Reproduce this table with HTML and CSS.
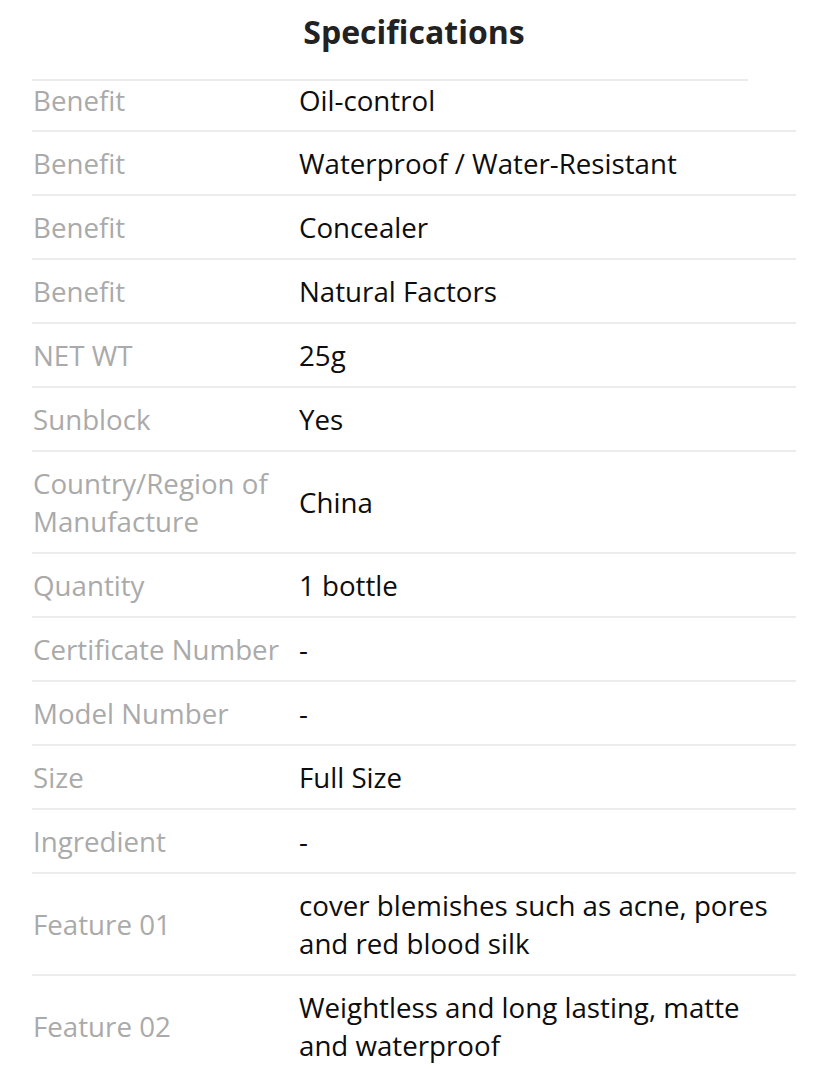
FILE: index.html
```html
<!DOCTYPE html>
<html>
<head>
<meta charset="utf-8">
<link rel="stylesheet" href="styles.css">
</head>
<body>
<div class="specs">
  <h1 class="title">Specifications</h1>
  <div class="rows">
    <div class="row first"><div class="label">Benefit</div><div class="value">Oil-control</div></div>
    <div class="row"><div class="label">Benefit</div><div class="value">Waterproof / Water-Resistant</div></div>
    <div class="row"><div class="label">Benefit</div><div class="value">Concealer</div></div>
    <div class="row"><div class="label">Benefit</div><div class="value">Natural Factors</div></div>
    <div class="row"><div class="label">NET WT</div><div class="value">25g</div></div>
    <div class="row"><div class="label">Sunblock</div><div class="value">Yes</div></div>
    <div class="row"><div class="label">Country/Region of Manufacture</div><div class="value">China</div></div>
    <div class="row"><div class="label">Quantity</div><div class="value">1 bottle</div></div>
    <div class="row"><div class="label">Certificate Number</div><div class="value">-</div></div>
    <div class="row"><div class="label">Model Number</div><div class="value">-</div></div>
    <div class="row"><div class="label">Size</div><div class="value">Full Size</div></div>
    <div class="row"><div class="label">Ingredient</div><div class="value">-</div></div>
    <div class="row"><div class="label">Feature 01</div><div class="value">cover blemishes such as acne, pores and red blood silk</div></div>
    <div class="row"><div class="label">Feature 02</div><div class="value">Weightless and long lasting, matte and waterproof</div></div>
  </div>
</div>
</body>
</html>
```
FILE: styles.css
```css
html, body {
  margin: 0;
  padding: 0;
  background: #fff;
}
body {
  font-family: "Open Sans", "Noto Sans", sans-serif;
  overflow: hidden;
}
.specs {
  margin: 0 32px;
  width: 764px;
}
.title {
  margin: 0;
  height: 81px;
  padding-top: 9px;
  box-sizing: border-box;
  text-align: center;
  font-size: 32px;
  line-height: 46px;
  font-weight: 700;
  color: #222;
  border-bottom: 2px solid #ececec;
  margin-right: 48px;
  padding-left: 48px;
}
.rows {
  display: flex;
  flex-direction: column;
}
.row {
  display: grid;
  grid-template-columns: 267px 1fr;
  align-items: center;
  padding: 12px 0;
  border-bottom: 2px solid #ececec;
  font-size: 27.7px;
  line-height: 38px;
}
.row.first {
  padding: 0 0 11px;
}
.label {
  color: #aaaaaa;
  padding-left: 1px;
}
.value {
  color: #0d0d0d;
  padding-right: 10px;
}
```
